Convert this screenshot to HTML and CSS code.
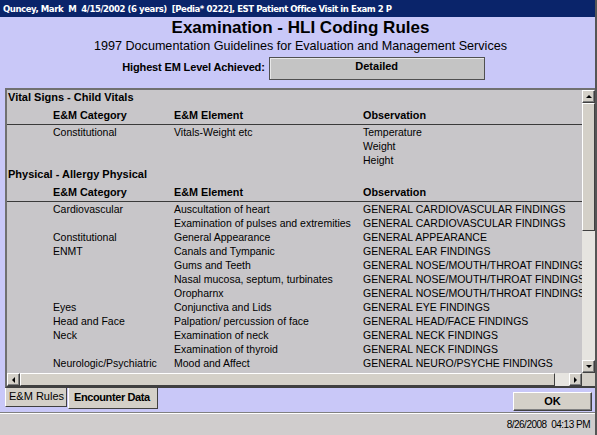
FILE: index.html
```html
<!DOCTYPE html>
<html>
<head>
<meta charset="utf-8">
<link rel="stylesheet" href="styles.css">
</head>
<body>
<div class="win">
  <div class="titlebar">Quncey, Mark&nbsp; M&nbsp; 4/15/2002 (6 years)&nbsp; [Pedia* 0222], EST Patient Office Visit in Exam 2 P</div>
  <div class="head">
    <div class="h1">Examination - HLI Coding Rules</div>
    <div class="h2">1997 Documentation Guidelines for Evaluation and Management Services</div>
    <div class="level">
      <span class="level-label">Highest EM Level Achieved:</span>
      <span class="level-box">Detailed</span>
    </div>
  </div>
  <div class="panel">
    <div class="panel-main">
      <div class="content">
        <div class="sec">Vital Signs - Child Vitals</div>
        <div class="row hdr"><span></span><span>E&amp;M Category</span><span>E&amp;M Element</span><span>Observation</span></div>
        <div class="row"><span></span><span>Constitutional</span><span>Vitals-Weight etc</span><span>Temperature</span></div>
        <div class="row"><span></span><span></span><span></span><span>Weight</span></div>
        <div class="row"><span></span><span></span><span></span><span>Height</span></div>
        <div class="sec">Physical - Allergy Physical</div>
        <div class="row hdr"><span></span><span>E&amp;M Category</span><span>E&amp;M Element</span><span>Observation</span></div>
        <div class="row"><span></span><span>Cardiovascular</span><span>Auscultation of heart</span><span>GENERAL CARDIOVASCULAR FINDINGS</span></div>
        <div class="row"><span></span><span></span><span>Examination of pulses and extremities</span><span>GENERAL CARDIOVASCULAR FINDINGS</span></div>
        <div class="row"><span></span><span>Constitutional</span><span>General Appearance</span><span>GENERAL APPEARANCE</span></div>
        <div class="row"><span></span><span>ENMT</span><span>Canals and Tympanic</span><span>GENERAL EAR FINDINGS</span></div>
        <div class="row"><span></span><span></span><span>Gums and Teeth</span><span>GENERAL NOSE/MOUTH/THROAT FINDINGS</span></div>
        <div class="row"><span></span><span></span><span>Nasal mucosa, septum, turbinates</span><span>GENERAL NOSE/MOUTH/THROAT FINDINGS</span></div>
        <div class="row"><span></span><span></span><span>Oropharnx</span><span>GENERAL NOSE/MOUTH/THROAT FINDINGS</span></div>
        <div class="row"><span></span><span>Eyes</span><span>Conjunctiva and Lids</span><span>GENERAL EYE FINDINGS</span></div>
        <div class="row"><span></span><span>Head and Face</span><span>Palpation/ percussion of face</span><span>GENERAL HEAD/FACE FINDINGS</span></div>
        <div class="row"><span></span><span>Neck</span><span>Examination of neck</span><span>GENERAL NECK FINDINGS</span></div>
        <div class="row"><span></span><span></span><span>Examination of thyroid</span><span>GENERAL NECK FINDINGS</span></div>
        <div class="row"><span></span><span>Neurologic/Psychiatric</span><span>Mood and Affect</span><span>GENERAL NEURO/PSYCHE FINDINGS</span></div>
      </div>
      <div class="vscroll">
        <div class="sbtn"><span class="arr up"></span></div>
        <div class="vthumb"></div>
        <div class="track"></div>
        <div class="sbtn"><span class="arr down"></span></div>
      </div>
    </div>
    <div class="panel-bottom">
      <div class="hscroll">
        <div class="sbtn"><span class="arr left"></span></div>
        <div class="hthumb"></div>
        <div class="track"></div>
        <div class="sbtn"><span class="arr right"></span></div>
      </div>
      <div class="corner"></div>
    </div>
  </div>
  <div class="tabbar">
    <div class="tabs">
      <div class="tab">E&amp;M Rules</div>
      <div class="tab active">Encounter Data</div>
    </div>
    <div class="okbtn">OK</div>
  </div>
  <div class="status">8/26/2008&nbsp; 04:13 PM</div>
</div>
</body>
</html>
```
FILE: styles.css
```css
* { box-sizing: border-box; }
html, body { margin: 0; padding: 0; }
body { width: 597px; height: 435px; overflow: hidden; font-family: "Liberation Sans", Arial, sans-serif; }
.win {
  width: 597px; height: 435px;
  background: #c9c8f8;
  border-right: 2px solid #555;
  display: flex; flex-direction: column;
}
.titlebar {
  height: 17px;
  background: #0a246a;
  color: #fff;
  font-family: "DejaVu Sans Condensed", "DejaVu Sans", sans-serif;
  font-weight: bold;
  font-size: 9.5px;
  letter-spacing: -0.45px;
  line-height: 17px;
  padding-left: 3px;
  white-space: nowrap;
  overflow: hidden;
}
.head {
  height: 71px;
  display: flex; flex-direction: column; align-items: center;
  padding-left: 6px;
}
.h1 { font-weight: bold; font-size: 17px; line-height: 20px; margin-top: 1px; }
.h2 { font-size: 12.6px; line-height: 16px; }
.level { display: flex; align-items: flex-start; margin-top: 3px; margin-left: 6px; }
.level-label { font-weight: bold; font-size: 11px; letter-spacing: -0.15px; line-height: 14px; margin-top: 3px; margin-right: 4px; }
.level-box {
  width: 216px; height: 23px;
  background: #c4c4c4;
  border: 1px solid #505050;
  box-shadow: inset 1px 1px 0 #e8e8e8;
  font-weight: bold; font-size: 11px;
  text-align: center; line-height: 14px;
  padding-top: 1px;
}
.panel {
  margin-left: 5px;
  width: 590px;
  height: 300px;
  border-top: 2px solid #707070;
  border-left: 2px solid #707070;
  border-bottom: 2px solid #404040;
  display: flex; flex-direction: column;
  background: #c8c6c9;
}
.panel-main { flex: 1; display: flex; min-height: 0; }
.content {
  flex: 1; overflow: hidden;
  font-size: 10.5px;
  white-space: nowrap;
}
.sec { font-weight: bold; font-size: 11px; height: 14px; line-height: 14px; padding-left: 1px; }
.row {
  display: grid;
  grid-template-columns: 46px 121px 189px 1fr;
  height: 14px; line-height: 14px;
}
.hdr {
  font-weight: bold;
  font-size: 10.8px;
  height: 21px;
  padding-top: 4px;
  border-bottom: 1px solid #3a3a3a;
}
.vscroll { width: 13px; display: flex; flex-direction: column; background: #d4d0c8; }
.sbtn {
  width: 13px; height: 13px;
  background: #d4d0c8;
  border-top: 1px solid #fff; border-left: 1px solid #fff;
  border-right: 1px solid #404040; border-bottom: 1px solid #404040;
  box-shadow: inset -1px -1px 0 #808080;
  display: flex; align-items: center; justify-content: center;
  flex: none;
}
.arr { width: 0; height: 0; }
.arr.up { border-left: 3px solid transparent; border-right: 3px solid transparent; border-bottom: 3px solid #000; }
.arr.down { border-left: 3px solid transparent; border-right: 3px solid transparent; border-top: 3px solid #000; }
.arr.left { border-top: 3px solid transparent; border-bottom: 3px solid transparent; border-right: 3px solid #000; }
.arr.right { border-top: 3px solid transparent; border-bottom: 3px solid transparent; border-left: 3px solid #000; }
.vthumb {
  height: 128px; flex: none;
  background: #d4d0c8;
  border-top: 1px solid #fff; border-left: 1px solid #fff;
  border-right: 1px solid #404040; border-bottom: 1px solid #404040;
}
.track { flex: 1; background: #e6e4e0; }
.panel-bottom { height: 13px; display: flex; }
.hscroll { flex: 1; display: flex; }
.hthumb {
  width: 535px; flex: none;
  background: #d4d0c8;
  border-top: 1px solid #fff; border-left: 1px solid #fff;
  border-right: 1px solid #404040; border-bottom: 1px solid #404040;
}
.corner { width: 13px; background: #d4d0c8; }
.tabbar { height: 23px; display: flex; justify-content: space-between; align-items: flex-start; }
.tabs { display: flex; margin-left: 5px; align-items: flex-start; }
.tab {
  height: 19px;
  width: 62px;
  background: #d4d0c8;
  border-left: 1px solid #fff;
  border-right: 1px solid #404040;
  border-bottom: 1px solid #404040;
  font-size: 11px; line-height: 17px;
  padding: 0 0 0 3px;
  white-space: nowrap;
  overflow: hidden;
}
.tab.active {
  font-weight: bold;
  height: 21px;
  width: 90px;
  padding: 0 0 0 5px;
  letter-spacing: -0.4px;
  line-height: 19px;
  margin-left: 1px;
}
.okbtn {
  margin-top: 4px; margin-right: 3px;
  width: 79px; height: 19px;
  background: #d4d0c8;
  border-top: 1px solid #fff; border-left: 1px solid #fff;
  border-right: 1px solid #404040; border-bottom: 1px solid #404040;
  box-shadow: inset -1px -1px 0 #808080;
  font-weight: bold; font-size: 11px;
  text-align: center; line-height: 17px;
}
.status {
  flex: 1;
  background: #d0cdcd;
  border-top: 1px solid #808080;
  box-shadow: inset 0 1px 0 #fff;
  margin-top: 1px;
  font-size: 10px;
  text-align: right;
  padding-right: 5px;
  padding-top: 6px;
  letter-spacing: -0.5px;
  line-height: 12px;
}
```
